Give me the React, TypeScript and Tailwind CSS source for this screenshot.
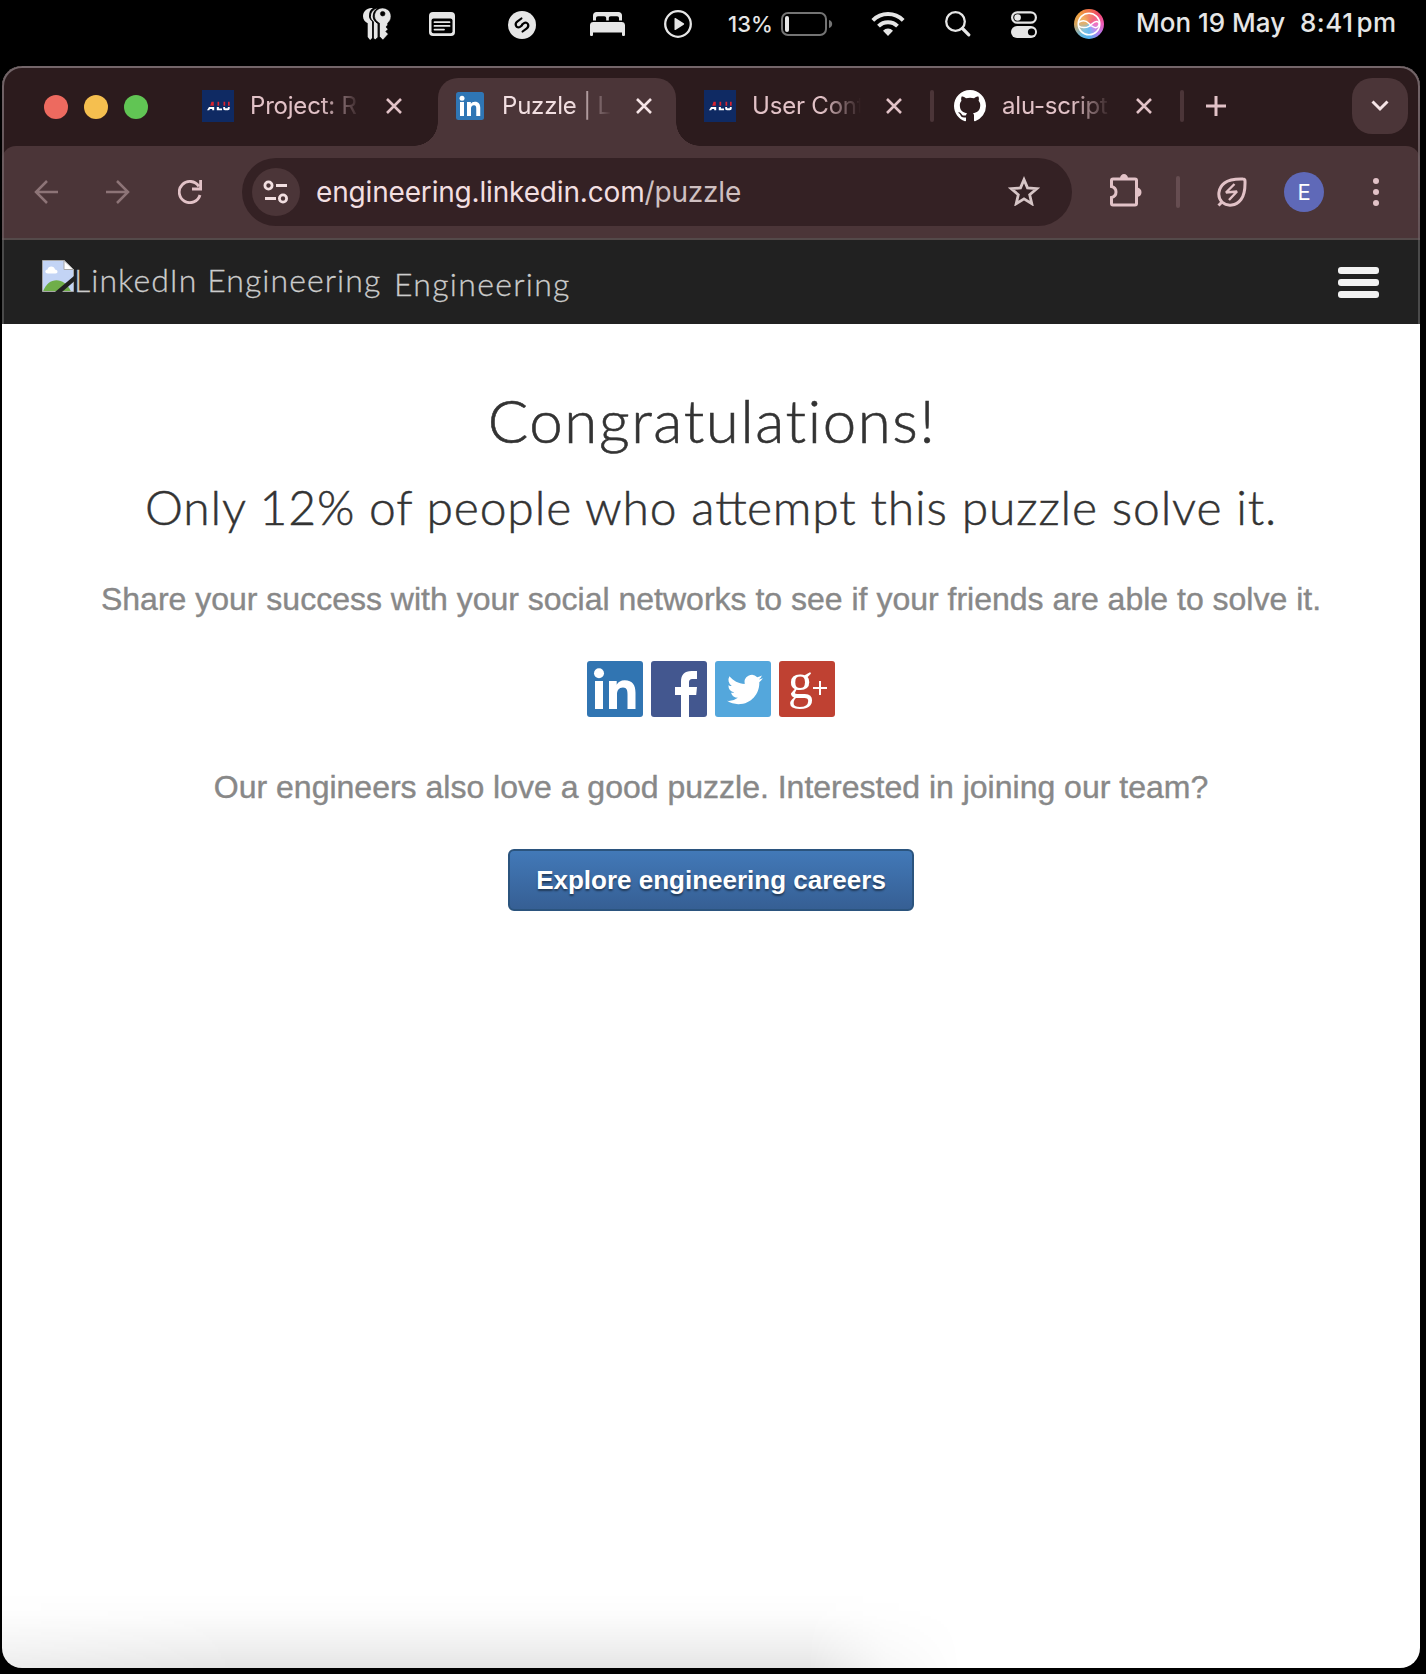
import type { ReactNode } from "react";

const INTER = "font-['Inter',sans-serif]";
const LATO = "font-['Lato',sans-serif]";
const ARIAL = "font-['Liberation_Sans',Arial,sans-serif]";

function KeyShape() {
  return (
    <path
      fillRule="evenodd"
      d="M19.5 0C24.2 0 28 3.6 28 8.2c0 3-1.3 5.400-3.300 6.900v1.900l-1.700 2 2 2.200-2.200 2.300 2.500 2.600-5.400 5.900L16.500 28.500V15.200C14.200 14 11.500 11.400 11.500 8.200 11.500 3.600 14.800 0 19.500 0ZM19.700 3.400a2.300 2.300 0 1 0 0 4.600 2.300 2.300 0 0 0 0-4.600Z"
    />
  );
}

function KeysIcon() {
  return (
    <svg width="28" height="32" viewBox="0 0 28 32" fill="#e6e6e6">
      <path d="M8.500 0C3.500 0 0 3.800 0 8.300c0 3 1.900 5.700 4.700 6.900v13.800l2.400 3 2-2V13.500C7.300 12 6 10.500 6 8.300 6 4.500 7 1.800 10 .1Z" />
      <path d="M13.500 .2C10 1.100 7.400 4.500 7.400 8.300c0 2.200 1 4 2.900 5.300V30l1.800 2 3-2.600V15.600C12 14 10.200 11.500 10.200 8.300 10.200 4.600 12 1.600 15 .3Z" stroke="#000" strokeWidth="1" />
      <g stroke="#000" strokeWidth=".6"><KeyShape /></g>
    </svg>
  );
}

function NoteIcon() {
  return (
    <svg width="26" height="24" viewBox="0 0 26 24">
      <rect width="26" height="24" rx="4" fill="#e6e6e6" />
      <rect x="2.500" y="6.500" width="21" height="14.700" rx="2" fill="#000" />
      <path d="M5.500 10.200h15M5.500 13.900h15M5.500 17.600h9.500" stroke="#e6e6e6" strokeWidth="1.800" strokeLinecap="round" />
    </svg>
  );
}

function ShazamIcon() {
  return (
    <svg width="28" height="28" viewBox="0 0 28 28">
      <circle cx="14" cy="14" r="14" fill="#e6e6e6" />
      <path d="M13.400 7.500 9.200 10.700C6 13.200 8.600 18 12 15.800l2-1.500M14.600 20.500l4.200-3.200c3.200-2.500.6-7.300-2.800-5.100l-2 1.500" fill="none" stroke="#000" strokeWidth="2.200" strokeLinecap="round" />
    </svg>
  );
}

function BedIcon() {
  return (
    <svg width="35" height="24" viewBox="0 0 35 24" fill="#e6e6e6">
      <path d="M3 8.500V3.500C3 1.300 4.500 0 6.500 0h22C30.500 0 32 1.300 32 3.500v5h-3V6.200C29 4.900 28.300 4.200 27 4.200h-6.200c-1.300 0-2 .7-2 2v2.300h-2.600V6.200c0-1.300-.7-2-2-2H8c-1.300 0-2 .7-2 2v2.300Z" />
      <path d="M0 13.300C0 11.200 1.300 10 3.400 10h28.200c2.100 0 3.400 1.200 3.400 3.300v9.400c0 .8-.5 1.300-1.500 1.300S32 23.500 32 22.700V20.500H3v2.200c0 .8-.5 1.300-1.500 1.300S0 23.500 0 22.700Z" />
    </svg>
  );
}

function PlayIcon() {
  return (
    <svg width="28" height="28" viewBox="0 0 28 28">
      <circle cx="14" cy="14" r="12.800" fill="none" stroke="#e6e6e6" strokeWidth="2.300" />
      <path d="M10.500 8.600v10.800c0 .6.500.8 1 .5l8.200-5.200c.6-.4.6-1 0-1.400l-8.200-5.200c-.5-.3-1-.1-1 .5Z" fill="#e6e6e6" />
    </svg>
  );
}

function BatteryIcon() {
  return (
    <svg width="52" height="24" viewBox="0 0 52 24">
      <rect x="1" y="1" width="44" height="22" rx="6" fill="none" stroke="#747474" strokeWidth="2" />
      <rect x="4" y="4" width="4" height="16" rx="2" fill="#e6e6e6" />
      <path d="M48 8c2 .6 3.200 2.100 3.200 4S50 15.400 48 16Z" fill="#747474" />
    </svg>
  );
}

function WifiIcon() {
  return (
    <svg width="34" height="26" viewBox="0 0 34 26">
      <path d="M1.800 9.300a21.500 21.500 0 0 1 30.400 0" fill="none" stroke="#e6e6e6" strokeWidth="3.900" />
      <path d="M7.500 15.200a13.500 13.500 0 0 1 19 0" fill="none" stroke="#e6e6e6" strokeWidth="3.900" />
      <path d="M12 19.700a7 7 0 0 1 10 0L17 25Z" fill="#e6e6e6" />
    </svg>
  );
}

function SpotlightIcon() {
  return (
    <svg width="26" height="26" viewBox="0 0 26 26" fill="none" stroke="#e6e6e6" strokeLinecap="round">
      <circle cx="10.500" cy="10.500" r="9.300" strokeWidth="2.300" />
      <path d="m17.500 17.500 6.300 6.300" strokeWidth="3.200" />
    </svg>
  );
}

function ControlCentreIcon() {
  return (
    <svg width="26" height="27" viewBox="0 0 26 27">
      <rect x="1.100" y="1.300" width="23.800" height="10.400" rx="5.200" fill="none" stroke="#e6e6e6" strokeWidth="2.200" />
      <circle cx="6.600" cy="6.500" r="3.300" fill="#e6e6e6" />
      <rect y="15" width="26" height="12" rx="6" fill="#e6e6e6" />
      <circle cx="20.500" cy="21" r="3.600" fill="#000" />
    </svg>
  );
}

function SiriIcon() {
  return (
    <div className="flex size-[30px] items-center justify-center rounded-full bg-[conic-gradient(from_0deg,#f0704a,#f04a6c_45deg,#f05ab8_90deg,#b07cf0_135deg,#4fb0f0_180deg,#66b8e0_215deg,#d6a45c_270deg,#f0a040_315deg,#f0704a)]">
      <svg width="24" height="24" viewBox="0 0 24 24" fill="none" stroke="#fff" strokeWidth="1.500">
        <circle cx="12" cy="12" r="10.800" fill="#fff" fillOpacity=".15" />
        <path d="M1.500 10.500C6 7.500 9 8.500 12 11.500s6 5.500 8.500 3.500 2-5-.5-5.500c-3-.6-5 3-8 4.800S4 16 1.800 14" />
      </svg>
    </div>
  );
}

function MenuBar() {
  return (
    <div className={`${INTER} flex h-[48px] items-center pl-[363px] text-[#e6e6e6]`}>
      <KeysIcon />
      <div className="ml-[38px]"><NoteIcon /></div>
      <div className="mt-[2px] ml-[53px]"><ShazamIcon /></div>
      <div className="ml-[54px]"><BedIcon /></div>
      <div className="ml-[39px]"><PlayIcon /></div>
      <span className="ml-[36px] w-[53px] text-[22px] leading-[48px] font-medium whitespace-nowrap tracking-[0.1px]">13%</span>
      <BatteryIcon />
      <div className="ml-[38px]"><WifiIcon /></div>
      <div className="ml-[40px]"><SpotlightIcon /></div>
      <div className="ml-[40px]"><ControlCentreIcon /></div>
      <div className="ml-[37px]"><SiriIcon /></div>
      <span className="mt-[-3px] ml-[32px] w-[164px] text-[26px] leading-[48px] font-medium whitespace-nowrap">Mon 19 May</span>
      <span className="mt-[-3px] text-[26px] leading-[48px] font-medium whitespace-nowrap tracking-[0.5px]">8:41<span className="ml-[3px]">pm</span></span>
    </div>
  );
}

function AluIcon() {
  return (
    <svg width="32" height="32" viewBox="0 0 32 32" className="shrink-0">
      <rect width="32" height="32" fill="#0f2a63" />
      <path d="M9.500 11.800h2.300v3.900H8.200ZM15.500 11.800h1.700v3.900h-1.700ZM21.500 11.800h1.700v3.900h-1.700ZM26 11.800h1.700v3.900H26Z" fill="#d8232f" />
      <path d="M5 20.200 7 17h5.200v3.200h-2V19H8l-.8 1.200ZM14.800 17h2.100v1.500h3.100v1.700h-5.200ZM21.200 17h1.900v1.300h2.700V17h1.900v1.600c0 1.200-.8 1.600-1.800 1.600h-2.900c-1.200 0-1.800-.6-1.800-1.600Z" fill="#fff" />
    </svg>
  );
}

function LinkedInGlyph() {
  return (
    <>
      <circle cx="12" cy="12.300" r="5" />
      <path d="M8 20h8v28H8ZM22 20h7.700v3.700c1.600-2.700 4.200-4.400 8-4.400 8 0 10.800 5 10.800 12.400V48h-8V33.500c0-4-.6-7-4.500-7-4.200 0-6 3-6 7V48h-8Z" />
    </>
  );
}

function GitHubIcon() {
  return (
    <svg width="32" height="32" viewBox="0 0 16 16" fill="#fff" className="shrink-0">
      <path d="M8 0C3.580 0 0 3.580 0 8c0 3.540 2.290 6.530 5.470 7.590.4.070.55-.17.55-.38 0-.19-.01-.82-.01-1.490-2.010.37-2.530-.49-2.690-.94-.09-.23-.48-.94-.82-1.130-.28-.15-.68-.52-.01-.53.63-.01 1.080.58 1.230.82.72 1.210 1.870.87 2.330.66.070-.52.28-.87.51-1.070-1.780-.2-3.640-.89-3.640-3.950 0-.87.31-1.590.82-2.150-.08-.2-.36-1.020.08-2.120 0 0 .67-.21 2.200.82.64-.18 1.320-.27 2-.27s1.360.09 2 .27c1.530-1.040 2.200-.82 2.200-.82.44 1.100.16 1.920.08 2.120.51.56.82 1.270.82 2.150 0 3.070-1.870 3.750-3.650 3.950.29.25.54.73.54 1.480 0 1.070-.01 1.930-.01 2.200 0 .21.15.46.55.38A8.010 8.010 0 0 0 16 8c0-4.420-3.580-8-8-8Z" />
    </svg>
  );
}

function CloseIcon({ color }: { color: string }) {
  return (
    <svg width="16" height="16" viewBox="0 0 16 16" fill="none" stroke={color} strokeWidth="2.600" className="shrink-0">
      <path d="m1 1 14 14M15 1 1 15" />
    </svg>
  );
}

function Tab({ icon, title, active = false, first = false }: { icon: ReactNode; title: string; active?: boolean; first?: boolean }) {
  return (
    <div className={`flex h-[56px] w-[250px] shrink-0 items-center ${first ? "" : "pl-[2px]"} ${active ? "text-[#f2dfe1]" : "text-[#e2c2c7]"}`}>
      <div className="flex w-[32px] justify-center">{icon}</div>
      <span className={`ml-[16px] ${first ? "w-[111px]" : "w-[109px]"} text-[24px] leading-[56px] tracking-[-0.2px] whitespace-nowrap [mask-image:linear-gradient(to_right,black_64%,transparent)]`}>{title}</span>
      <div className="ml-[25px]"><CloseIcon color={active ? "#f5e4e6" : "#e2c2c7"} /></div>
    </div>
  );
}

function TabStrip() {
  return (
    <div className="relative flex h-[78px] pt-[10px] pl-[42px]">
      <div className="flex h-[58px] items-center gap-[16px]">
        <span className="size-[24px] rounded-full bg-[#ed6a5f]" />
        <span className="size-[24px] rounded-full bg-[#f5bf4f]" />
        <span className="size-[24px] rounded-full bg-[#61c554]" />
      </div>
      <div className="absolute top-[10px] left-[436px] h-[68px] w-[238px] rounded-t-[20px] bg-[#4b3538]">
        <span className="absolute bottom-0 left-[-24px] size-[24px] bg-[radial-gradient(circle_at_top_left,transparent_23.500px,#4b3538_24px)]" />
        <span className="absolute right-[-24px] bottom-0 size-[24px] bg-[radial-gradient(circle_at_top_right,transparent_23.500px,#4b3538_24px)]" />
      </div>
      <div className="relative ml-[54px] flex items-start">
        <Tab first icon={<AluIcon />} title="Project: R" />
        <Tab
          active
          title="Puzzle | L"
          icon={
            <svg width="28" height="28" viewBox="0 0 56 56" fill="#fff">
              <rect width="56" height="56" rx="5" fill="#2f76b5" />
              <LinkedInGlyph />
            </svg>
          }
        />
        <Tab icon={<AluIcon />} title="User Cont" />
        <Tab icon={<GitHubIcon />} title="alu-script" />
        <span className="absolute top-[12px] left-[728px] h-[32px] w-[4px] rounded-full bg-[#4b3538]" />
        <span className="absolute top-[12px] left-[978px] h-[32px] w-[4px] rounded-full bg-[#4b3538]" />
      </div>
      <svg width="20" height="20" viewBox="0 0 20 20" className="mt-[18px] ml-[4px]">
        <path d="M0 10h20M10 0v20" stroke="#e2c2c7" strokeWidth="3" />
      </svg>
      <div className="mr-[12px] ml-auto flex size-[56px] items-center justify-center rounded-[20px] bg-[#4b3538]">
        <svg width="18" height="12" viewBox="0 0 18 12" fill="none" stroke="#f5e4e6" strokeWidth="3">
          <path d="m1.500 1.500 7.500 7.500 7.500-7.500" />
        </svg>
      </div>
    </div>
  );
}

function Toolbar() {
  return (
    <div className="flex h-[94px] items-center rounded-t-[14px] border-b-2 border-[#544a4a] bg-[#4b3538] pl-[32px]">
      <svg width="24" height="24" viewBox="0 0 24 24" fill="none" stroke="#8d7477" strokeWidth="2.500">
        <path d="M24 12H2M13 1 2 12l11 11" />
      </svg>
      <svg width="24" height="24" viewBox="0 0 24 24" fill="none" stroke="#8d7477" strokeWidth="2.500" className="ml-[48px]">
        <path d="M0 12h22M11 1l11 11-11 11" />
      </svg>
      <svg width="24" height="24" viewBox="0 0 24 24" fill="none" stroke="#e2c2c7" strokeWidth="2.800" className="ml-[48px]">
        <path d="M22 15a10.600 10.600 0 1 1-1.200-8.600M22.600 0v9H14" />
      </svg>
      <div className="ml-[40px] flex h-[68px] w-[830px] items-center rounded-full bg-[#342124] pl-[10px]">
        <div className="flex size-[48px] items-center justify-center rounded-full bg-[#4b3538]">
          <svg width="26" height="24" viewBox="0 0 26 24" fill="none" stroke="#f2dfe1" strokeWidth="2.800">
            <circle cx="5.500" cy="5.500" r="3.600" />
            <path d="M13 5.500h11M2 18.500h11" />
            <circle cx="20" cy="18.500" r="3.600" />
          </svg>
        </div>
        <span className="ml-[16px] text-[28px] leading-[68px] tracking-[-0.17px] whitespace-nowrap text-[#f2dfe1]">
          engineering.linkedin.com<span className="text-[#cfc0c1]">/puzzle</span>
        </span>
        <svg width="32" height="30" viewBox="0 0 32 30" fill="none" stroke="#d6c5c6" strokeWidth="2.800" className="mt-[-2px] mr-[32px] ml-auto">
          <path d="m16 3.600 3.500 8.300 9.200.8-7 6 2.100 9-7.800-4.800-7.800 4.800 2.100-9-7-6 9.200-.8Z" />
        </svg>
      </div>
      <svg width="34" height="34" viewBox="0 0 34 34" className="mt-[-3px] ml-[37px]">
        <path d="M2.500 6.500c0-1 .8-1.500 1.500-1.500h22c1.200 0 1.500.6 1.500 1.500v23c0 1-.5 1.500-1.500 1.500H4c-1 0-1.500-.5-1.500-1.500v-6c6-1.500 6-9.500 0-11Z" fill="none" stroke="#e2c2c7" strokeWidth="3" />
        <path d="M11 4.500c0-6 8-6 8 0ZM28 13.500c6 .5 6 9 0 9.500Z" fill="#e2c2c7" />
      </svg>
      <span className="ml-[33px] h-[32px] w-[4px] rounded-full bg-[#664d51]" />
      <svg width="30" height="30" viewBox="0 0 30 30" fill="none" stroke="#e2c2c7" strokeWidth="3" className="ml-[37px]">
        <path d="M5 25C0 20 1 11 7.500 6 12.500 2 19 1.800 26 2c1.500 0 2 .5 2 2 .2 7 0 13.500-4 18.500C19 29 10.500 30 5 25ZM5 25l-3.500 3.500" />
        <path d="M17.500 7 9 15.500l11-1L12 23" strokeWidth="2.400" strokeLinejoin="bevel" />
      </svg>
      <span className="ml-[37px] flex size-[40px] items-center justify-center rounded-full bg-[#5f69b8] text-[22px] leading-[40px] text-white">E</span>
      <div className="ml-[49px] flex flex-col gap-[5px]">
        <span className="size-[6px] rounded-full bg-[#e2c2c7]" />
        <span className="size-[6px] rounded-full bg-[#e2c2c7]" />
        <span className="size-[6px] rounded-full bg-[#e2c2c7]" />
      </div>
    </div>
  );
}

function BrokenImageIcon() {
  return (
    <svg width="32" height="32" viewBox="0 0 32 32">
      <path d="M.5.500h21.500l9.500 9v22H.5Z" fill="#c3d4f5" />
      <path d="M6 13.500c-3.500 0-3.500-3.500-.5-4C6 5.500 12.500 5.500 13 9.500c3 .2 3.500 4 .5 4Z" fill="#fff" />
      <path d="M1 31.500C6 17 22 16 29 31.500Z" fill="#6fae49" />
      <path d="M.5.500h21.500l9.500 9v22H.5Z" fill="none" stroke="#a7a7a7" />
      <path d="M22 .5v9h9.500Z" fill="#fff" stroke="#a7a7a7" />
      <path d="M13 32 32 16v5.500L20 32Z" fill="#212121" />
    </svg>
  );
}

function SiteHeader() {
  return (
    <header className={`${LATO} flex h-[84px] items-start border-x-2 border-[#4a4a4a] bg-[#212121] pl-[38px] font-light text-[#ccc] [-webkit-text-stroke:0.3px_#ccc]`}>
      <div className="mt-[20px] h-[32px] w-[32px]">
        <BrokenImageIcon />
      </div>
      <span className="mt-[20px] w-[320px] text-[32px] leading-[40px] tracking-[1.07px] whitespace-nowrap">LinkedIn Engineering</span>
      <span className="mt-[24px] text-[32px] leading-[40px] tracking-[1.3px] whitespace-nowrap">Engineering</span>
      <div className="mt-[27px] mr-[39px] ml-auto flex flex-col gap-[5px]">
        <span className="h-[7px] w-[41px] rounded-[3px] bg-[#f2f2f2]" />
        <span className="h-[7px] w-[41px] rounded-[3px] bg-[#f2f2f2]" />
        <span className="h-[7px] w-[41px] rounded-[3px] bg-[#f2f2f2]" />
      </div>
    </header>
  );
}

function SocialLinks() {
  return (
    <div className="mt-[42px] flex h-[56px] justify-center gap-2">
      <svg width="56" height="56" viewBox="0 0 56 56" fill="#fff" className="rounded-[3px] bg-[#3175b2]">
        <LinkedInGlyph />
      </svg>
      <svg width="56" height="56" viewBox="0 0 56 56" fill="#fff" className="rounded-[3px] bg-[#43578f]">
        <path d="M30 56V34h-6v-8h6v-5c0-7.500 3.500-11 10.500-11H46v8h-4c-3.200 0-4 1.200-4 4v4h8l-.8 8H38v22Z" />
      </svg>
      <svg width="56" height="56" viewBox="0 0 56 56" fill="#fff" className="rounded-[3px] bg-[#54a7dc]">
        <path
          transform="translate(12 10.500) scale(1.500)"
          d="M23.950 4.570a10 10 0 0 1-2.820.77 4.960 4.960 0 0 0 2.160-2.720c-.95.560-2 .96-3.120 1.180a4.920 4.920 0 0 0-8.380 4.480C7.690 8.090 4.070 6.130 1.640 3.160a4.920 4.920 0 0 0 1.520 6.570 4.900 4.900 0 0 1-2.230-.61v.06a4.920 4.920 0 0 0 3.950 4.830 5 5 0 0 1-2.210.08 4.940 4.940 0 0 0 4.600 3.420A9.870 9.870 0 0 1 0 19.540a14 14 0 0 0 7.550 2.210c9.050 0 14-7.500 14-13.990 0-.21 0-.42-.02-.63a9.940 9.940 0 0 0 2.420-2.560Z"
        />
      </svg>
      <div className="relative size-[56px] rounded-[3px] bg-[#bf4132] text-white">
        <span className="absolute top-[-8px] left-[9px] font-['Liberation_Serif',serif] text-[50px] leading-[56px]">g</span>
        <span className="absolute top-[26px] left-[34px] h-[2px] w-[14px] bg-white" />
        <span className="absolute top-[20px] left-[40px] h-[14px] w-[2px] bg-white" />
      </div>
    </div>
  );
}

export default function App() {
  return (
    <div className="h-[1674px] w-[1426px] overflow-hidden bg-black">
      <MenuBar />
      <div className="relative mt-[18px] ml-[2px] h-[1602px] w-[1418px] overflow-hidden rounded-[20px] bg-white">
        <div className={`${INTER} bg-[#2c1b1d] pt-[2px]`}>
          <TabStrip />
          <Toolbar />
        </div>
        <SiteHeader />
        <main className="text-center">
          <h1 className={`${LATO} pt-[64px] pl-[2px] text-[60px] leading-[64px] font-light tracking-[1.6px] text-[#333] [-webkit-text-stroke:0.6px_#333]`}>Congratulations!</h1>
          <h2 className={`${LATO} mt-[27px] text-[48px] leading-[56px] font-light tracking-[0.85px] whitespace-nowrap text-[#333] [-webkit-text-stroke:0.5px_#333]`}>
            Only 12% of people who a<span className="tracking-normal">tt</span>empt this puzzle solve it.
          </h2>
          <p className={`${ARIAL} mt-[44px] text-[32px] leading-[40px] whitespace-nowrap text-[#888] [-webkit-text-stroke:0.4px_#888]`}>
            Share your success with your social networks to see if your friends are able to solve it.
          </p>
          <SocialLinks />
          <p className={`${ARIAL} mt-[50px] text-[32px] leading-[40px] whitespace-nowrap text-[#888] [-webkit-text-stroke:0.4px_#888]`}>
            Our engineers also love a good puzzle. Interested in joining our team?
          </p>
          <button className={`${ARIAL} mt-[42px] h-[62px] w-[406px] rounded-[6px] border-2 border-[#2b547e] bg-linear-to-b from-[#4279b8] to-[#365f94] text-[26px] leading-[58px] font-bold whitespace-nowrap text-white [text-shadow:0_2px_2px_rgba(0,0,0,0.45)]`}>
            Explore engineering careers
          </button>
        </main>
        <div className="absolute bottom-0 left-0 h-[76px] w-[960px] bg-[linear-gradient(to_top,rgba(0,0,0,0.1),rgba(0,0,0,0.05)_35%,rgba(0,0,0,0.012)_70%,transparent)] [mask-image:linear-gradient(to_right,rgba(0,0,0,0.7),black_25%,black_84%,rgba(0,0,0,0.3)_92%,transparent)]" />
        <div className="pointer-events-none absolute inset-x-0 top-0 h-[174px] rounded-t-[20px] border-2 border-b-0 border-[#74666a] [mask-image:linear-gradient(to_bottom,black,rgba(0,0,0,0.6))]" />
      </div>
    </div>
  );
}
